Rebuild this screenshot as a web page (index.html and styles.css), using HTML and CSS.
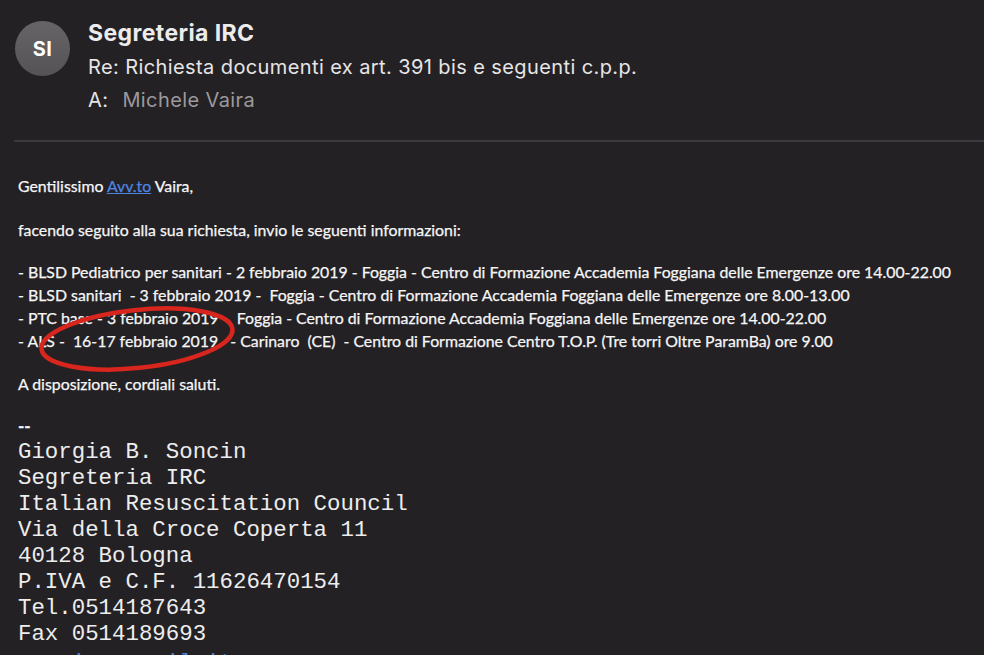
FILE: index.html
```html
<!DOCTYPE html>
<html lang="it">
<head>
<meta charset="utf-8">
<title>Re: Richiesta documenti</title>
<link rel="stylesheet" href="styles.css">
</head>
<body>
<div class="page">
  <header class="head">
    <div class="avatar">SI</div>
    <div class="meta">
      <div class="from">Segreteria IRC</div>
      <div class="subject">Re: Richiesta documenti ex art. 391 bis e seguenti c.p.p.</div>
      <div class="to"><span class="to-label">A:</span><span class="to-name">Michele Vaira</span></div>
    </div>
  </header>
  <div class="sep"></div>
  <main class="body">
    <p class="para">Gentilissimo <a class="link" href="#">Avv.to</a> Vaira,</p>
    <p class="para para-tight">facendo seguito alla sua richiesta, invio le seguenti informazioni:</p>
    <div class="list">
      <div class="row">- BLSD Pediatrico per sanitari - 2 febbraio 2019 - Foggia - Centro di Formazione Accademia Foggiana delle Emergenze ore 14.00-22.00</div>
      <div class="row">- BLSD sanitari &nbsp;- 3 febbraio 2019 - &nbsp;Foggia - Centro di Formazione Accademia Foggiana delle Emergenze ore 8.00-13.00</div>
      <div class="row">- PTC base - 3 febbraio 2019 - &nbsp;Foggia - Centro di Formazione Accademia Foggiana delle Emergenze ore 14.00-22.00</div>
      <div class="row">- ALS - &nbsp;16-17 febbraio 2019 &nbsp; - Carinaro &nbsp;(CE) &nbsp;- Centro di Formazione Centro T.O.P. (Tre torri Oltre ParamBa) ore 9.00</div>
    </div>
    <p class="para">A disposizione, cordiali saluti.</p>
    <div class="dash">--</div>
    <div class="sig">
      <div>Giorgia B. Soncin</div>
      <div>Segreteria IRC</div>
      <div>Italian Resuscitation Council</div>
      <div>Via della Croce Coperta 11</div>
      <div>40128 Bologna</div>
      <div>P.IVA e C.F. 11626470154</div>
      <div>Tel.0514187643</div>
      <div>Fax 0514189693</div>
      <div class="sig-link">www.ircouncil.it</div>
    </div>
  </main>
  <svg class="circle" width="240" height="90" viewBox="0 0 240 90" aria-hidden="true">
    <ellipse cx="120" cy="45" rx="96" ry="29" fill="none" stroke="#d8251d" stroke-width="4.5" transform="rotate(-6 120 45)"/>
  </svg>
</div>
</body>
</html>
```
FILE: styles.css
```css
html, body {
  margin: 0;
  padding: 0;
  background: #242125;
  overflow: hidden;
}
.page {
  position: relative;
  width: 984px;
  height: 655px;
  overflow: hidden;
  background: #242125;
  color: #f2f2f2;
}
.head {
  display: flex;
  align-items: flex-start;
  gap: 18px;
  padding: 19px 0 0 15px;
  height: 101px;
}
.avatar {
  width: 55px;
  height: 55px;
  margin-top: 2px;
  border-radius: 50%;
  background: linear-gradient(#666467, #555356);
  color: #ffffff;
  font-family: Inter, "Liberation Sans", sans-serif;
  font-weight: 700;
  font-size: 20px;
  display: flex;
  align-items: center;
  justify-content: center;
  letter-spacing: 0.3px;
}
.meta {
  display: flex;
  flex-direction: column;
  font-family: Inter, "Liberation Sans", sans-serif;
}
.from {
  font-size: 23px;
  font-weight: 700;
  letter-spacing: 0.4px;
  color: #ececec;
  line-height: 28px;
}
.subject {
  font-size: 20px;
  letter-spacing: 0.4px;
  color: #e6e6e6;
  line-height: 26px;
  margin-top: 7px;
}
.to {
  font-size: 20px;
  letter-spacing: 0.4px;
  line-height: 26px;
  margin-top: 7px;
  display: flex;
  gap: 14px;
}
.to-label { color: #e6e6e6; }
.to-name { color: #9b999c; }
.sep {
  margin: 20px 0 0 14px;
  height: 2px;
  background: #3c3a3e;
}
.body {
  padding: 32px 0 0 18px;
  font-family: Lato, "Open Sans", sans-serif;
  font-size: 15.85px;
  line-height: 23px;
  color: #f6f6f6;
  -webkit-text-stroke: 0.25px #f6f6f6;
}
.para {
  margin: 0 0 21px 0;
}
.para-tight {
  margin-bottom: 19px;
}
.link {
  color: #4d86e0;
  -webkit-text-stroke: 0.25px #4d86e0;
  text-decoration: underline;
}
.list {
  margin: 0 0 20px 0;
  white-space: nowrap;
}
.dash {
  font-weight: 700;
  font-size: 17px;
  line-height: 20px;
  margin-top: 0;
}
.sig {
  font-family: "Liberation Mono", "DejaVu Sans Mono", monospace;
  font-size: 22.4px;
  line-height: 26px;
  margin-top: 3px;
  color: #ededed;
  -webkit-text-stroke: 0;
  white-space: nowrap;
}
.sig-link {
  margin-top: 3px;
  color: #4a7fd6;
}
.circle {
  position: absolute;
  left: 17px;
  top: 294px;
}
```
